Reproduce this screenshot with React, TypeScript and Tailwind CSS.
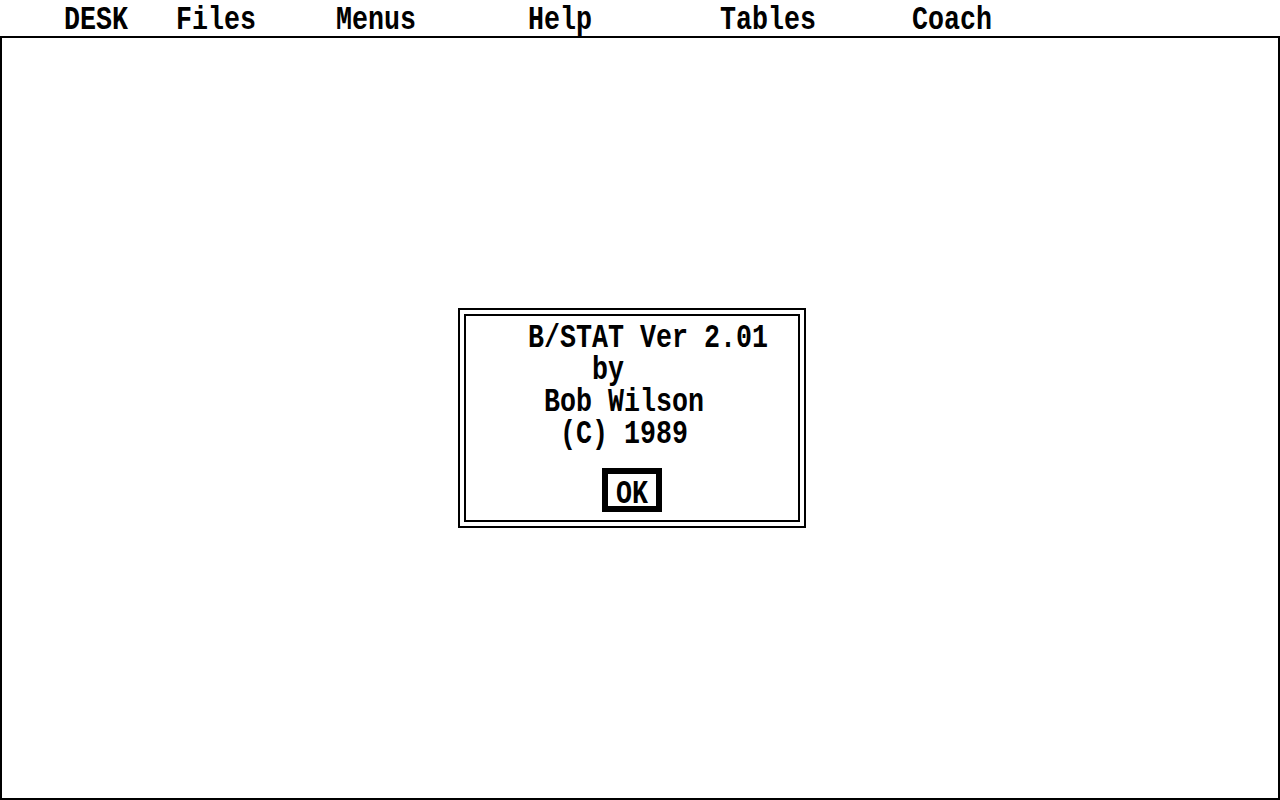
const menus = [
  { label: 'DESK', w: 'w-[112px]' },
  { label: 'Files', w: 'w-[160px]' },
  { label: 'Menus', w: 'w-[192px]' },
  { label: 'Help', w: 'w-[192px]' },
  { label: 'Tables', w: 'w-[192px]' },
  { label: 'Coach', w: 'w-auto' },
];

const aboutLines = ['B/STAT Ver 2.01', '    by', ' Bob Wilson', '  (C) 1989'];

// tall, narrow glyphs like the ST system font
const Line = ({ text, className = '' }: { text: string; className?: string }) => (
  <div
    className={`h-[32px] leading-[32px] whitespace-pre origin-center translate-y-[4px] scale-y-125 ${className}`}
  >
    {text}
  </div>
);

const App = () => {
  return (
    <div className="w-[1280px] h-[800px] overflow-hidden bg-white text-black font-['Liberation_Mono',monospace] font-bold text-[26.67px]">
      <div className="h-[38px] border-b-2 border-black flex pl-[64px]">
        {menus.map((m) => (
          <div key={m.label} className={m.w}>
            <Line text={m.label} />
          </div>
        ))}
      </div>

      <div className="h-[762px] border-x-2 border-b-2 border-black flex items-center justify-center">
        <div className="mr-[16px] border-2 border-black p-[4px]">
          <div className="w-[336px] h-[208px] border-2 border-black pt-[2px] flex flex-col">
            <div className="pl-[62px]">
              {aboutLines.map((l) => (
                <Line key={l} text={l} />
              ))}
            </div>
            <button className="mt-[22px] mx-auto w-[60px] h-[44px] border-[6px] border-black bg-white flex justify-center">
              <Line text="OK" className="-translate-y-[0px]" />
            </button>
          </div>
        </div>
      </div>
    </div>
  );
};

export default App;
